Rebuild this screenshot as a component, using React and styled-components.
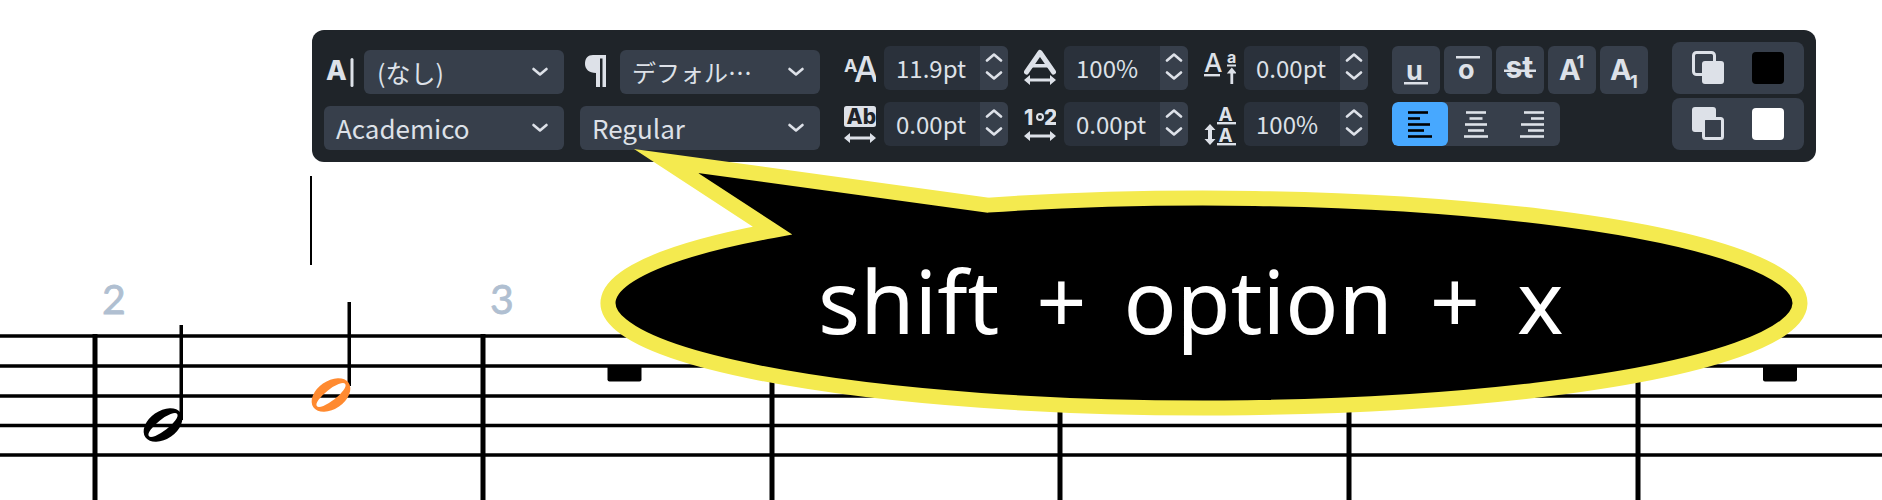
import React from "react";
import styled, { createGlobalStyle } from "styled-components";

const INK = "#dde1e8";
const UI_FONT = '"Noto Sans CJK JP", "Noto Sans", sans-serif';
const ICON_FONT = 'Inter, "Liberation Sans", sans-serif';

const Global = createGlobalStyle`
  html, body { margin: 0; padding: 0; background: #fff; }
  body { font-family: ${UI_FONT}; }
`;

const Stage = styled.div`
  position: relative;
  width: 1882px;
  height: 500px;
  overflow: hidden;
  background: #fff;
`;
const ScoreCanvas = styled.svg`
  display: block;
  width: 1882px;
  height: 500px;
`;
const BarNumber = styled.text`
  font-family: Lato, "Open Sans", sans-serif;
  font-size: 41px;
  fill: #b0bfd1;
  stroke: #b0bfd1;
  stroke-width: 0.8px;
`;

const Panel = styled.div`
  position: absolute;
  left: 312px;
  top: 30px;
  width: 1504px;
  height: 132px;
  box-sizing: border-box;
  padding: 12px;
  display: flex;
  gap: 24px;
  align-items: flex-start;
  background: #1f2429;
  border-radius: 12px;
`;
const Column = styled.div`
  display: flex;
  flex-direction: column;
  margin-top: ${(p) => p.$top || 0}px;
  gap: ${(p) => p.$gap ?? 12}px;
`;
const Row = styled.div`
  display: flex;
  gap: ${(p) => p.$gap ?? 16}px;
`;
const Labelled = styled.div`
  display: flex;
  align-items: center;
`;
const IconSlot = styled.div`
  width: ${(p) => p.$w || 40}px;
  height: 44px;
  flex: none;
`;
const Select = styled.div`
  width: ${(p) => p.$w}px;
  height: 44px;
  box-sizing: border-box;
  padding: 0 15px 0 ${(p) => p.$pad ?? 12}px;
  display: flex;
  align-items: center;
  justify-content: space-between;
  background: #373f4b;
  border-radius: 6px;
  color: ${INK};
  font-size: ${(p) => p.$size || 26}px;
  line-height: 44px;
  white-space: nowrap;
`;
const Spin = styled.div`
  width: 124px;
  height: 44px;
  display: flex;
  background: #2a313b;
  border-radius: 6px;
  overflow: hidden;
  color: ${INK};
  font-size: 24px;
  line-height: 44px;
`;
const SpinValue = styled.div`
  flex: 1;
  padding-left: 12px;
`;
const Stepper = styled.div`
  width: 28px;
  background: #373f4b;
  display: flex;
  align-items: center;
  justify-content: center;
`;
const ToggleButton = styled.div`
  width: 48px;
  height: 48px;
  background: #373f4b;
  border-radius: 6px;
`;
const AlignGroup = styled.div`
  display: flex;
  width: 168px;
  height: 44px;
  background: #373f4b;
  border-radius: 6px;
  overflow: hidden;
`;
const AlignButton = styled.div`
  width: 56px;
  height: 44px;
  background: ${(p) => (p.$active ? "#47a8ff" : "transparent")};
  border-radius: ${(p) => (p.$active ? "6px" : "0")};
`;
const ColorBox = styled.div`
  width: 132px;
  height: 52px;
  box-sizing: border-box;
  padding: 0 20px;
  display: flex;
  align-items: center;
  justify-content: space-between;
  background: #373f4b;
  border-radius: 8px;
`;
const Swatch = styled.div`
  width: 32px;
  height: 32px;
  border-radius: 4px;
  background: ${(p) => p.$color};
`;
const IconSvg = styled.svg`
  display: block;
`;
const Glyph = styled.text`
  font-family: ${ICON_FONT};
  font-weight: ${(p) => p.$weight || 700};
  font-size: ${(p) => p.$size}px;
  fill: ${(p) => p.$fill || INK};
`;

const Callout = styled.div`
  position: absolute;
  left: 590px;
  top: 140px;
  width: 1230px;
  height: 285px;
`;
const CalloutShape = styled.svg`
  display: block;
`;
const CalloutLabel = styled.div`
  position: absolute;
  left: 228px;
  top: 100px;
  font-family: "Noto Sans", sans-serif;
  font-size: 88px;
  line-height: 120px;
  word-spacing: 14px;
  color: #fff;
  white-space: nowrap;
`;

const ChevronDown = () => (
  <IconSvg width="18" height="10" viewBox="0 0 18 10">
    <path d="M2.5 2 9 7.5 15.5 2" fill="none" stroke={INK} strokeWidth="2.6" strokeLinecap="round" strokeLinejoin="round" />
  </IconSvg>
);
const StepperArrows = () => (
  <IconSvg width="18" height="30" viewBox="0 0 18 30">
    <path d="M2 7.5 9 1.5 16 7.5M2 19.5 9 25.5 16 19.5" fill="none" stroke={INK} strokeWidth="2.6" strokeLinecap="round" strokeLinejoin="round" />
  </IconSvg>
);
const HArrow = ({ y, x0 = 0, x1 = 32 }) => (
  <path
    d={`M${x0} ${y}l6 -5v3.4H${x1 - 6}v-3.4l6 5-6 5v-3.4H${x0 + 6}v3.4z`}
    fill={INK}
  />
);
const Icon = ({ w = 32, h = 44, children }) => (
  <IconSvg width={w} height={h} viewBox={`0 0 ${w} ${h}`}>{children}</IconSvg>
);

const StyleIcon = () => (
  <Icon w={40}>
    <Glyph x="2" y="30" $size={27} $weight={800}>A</Glyph>
    <rect x="26.5" y="8" width="3" height="29" rx="1.5" fill={INK} />
  </Icon>
);
const ParagraphIcon = () => (
  <Icon w={40}>
    <path
      d="M13 5H26V37H22.5V8.5H20V37H16V23C9 23 5 19 5 14 5 8 8 5 13 5z"
      fill={INK}
    />
  </Icon>
);
const SizeIcon = () => (
  <Icon>
    <Glyph x="0" y="26" $size={18} $weight={700}>A</Glyph>
    <Glyph x="10" y="36" $size={35} $weight={500}>A</Glyph>
  </Icon>
);
const WidthIcon = () => (
  <Icon>
    <path d="M2.5 26 16 6.5 29.5 26" fill="none" stroke={INK} strokeWidth="5" strokeLinecap="round" strokeLinejoin="round" />
    <rect x="8" y="18" width="16" height="3.5" fill={INK} />
    <HArrow y={34} />
  </Icon>
);
const BaselineIcon = () => (
  <Icon>
    <Glyph x="0" y="26" $size={26} $weight={500}>A</Glyph>
    <rect x="0" y="28" width="16" height="2.4" fill={INK} />
    <Glyph x="23" y="17" $size={16} $weight={700}>a</Glyph>
    <rect x="23" y="18.5" width="9.5" height="2" fill={INK} />
    <path d="M27.8 21.5l5 6h-3.6V38h-2.8V27.5h-3.6z" fill={INK} />
  </Icon>
);
const TrackingIcon = () => (
  <Icon>
    <rect x="0" y="4" width="32" height="21" rx="2.5" fill={INK} />
    <Glyph x="2.5" y="21.5" $size={21} $weight={800} $fill="#1f2429">Ab</Glyph>
    <HArrow y={36} />
  </Icon>
);
const SpacingIcon = () => (
  <Icon>
    <Glyph x="0" y="23" $size={21} $weight={800}>1</Glyph>
    <circle cx="16" cy="15" r="3" fill="none" stroke={INK} strokeWidth="2" />
    <Glyph x="20" y="23" $size={21} $weight={800}>2</Glyph>
    <HArrow y={34} />
  </Icon>
);
const LeadingIcon = () => (
  <Icon>
    <Glyph x="14.5" y="19" $size={19} $weight={700}>A</Glyph>
    <rect x="13" y="20" width="19" height="2.4" fill={INK} />
    <Glyph x="14.5" y="40" $size={19} $weight={700}>A</Glyph>
    <rect x="13" y="41" width="19" height="2.4" fill={INK} />
    <path d="M5 22l5.5 6H7V37h3.5L5 43-.5 37H3V28H-.5z" fill={INK} transform="translate(1 0)" />
  </Icon>
);

const UnderlineIcon = () => (
  <Icon w={48} h={48}>
    <Glyph x="14" y="34" $size={27} $weight={700}>u</Glyph>
    <rect x="12" y="36" width="24" height="2.5" fill={INK} />
  </Icon>
);
const OverlineIcon = () => (
  <Icon w={48} h={48}>
    <Glyph x="14" y="33" $size={27} $weight={700}>o</Glyph>
    <rect x="12" y="10" width="24" height="2.5" fill={INK} />
  </Icon>
);
const StrikeIcon = () => (
  <Icon w={48} h={48}>
    <Glyph x="9.5" y="32" $size={30} $weight={700}>st</Glyph>
    <rect x="8" y="23.5" width="32" height="2.5" fill={INK} />
  </Icon>
);
const SuperIcon = () => (
  <Icon w={48} h={48}>
    <Glyph x="11" y="34" $size={29} $weight={700}>A</Glyph>
    <Glyph x="28.5" y="22" $size={18} $weight={700}>1</Glyph>
  </Icon>
);
const SubIcon = () => (
  <Icon w={48} h={48}>
    <Glyph x="10" y="34" $size={29} $weight={700}>A</Glyph>
    <Glyph x="30" y="42" $size={18} $weight={700}>1</Glyph>
  </Icon>
);

const AlignIcon = ({ rows, color, anchor }) => (
  <Icon w={56}>
    {rows.map((len, i) => {
      const x = anchor === "left" ? 16 : anchor === "right" ? 40 - len : 28 - len / 2;
      return <rect key={i} x={x} y={9.2 + i * 6} width={len} height="2.6" fill={color} />;
    })}
  </Icon>
);

const ForeIcon = () => (
  <Icon h={34}>
    <rect x="1.5" y="1.5" width="21" height="22" rx="3" fill="none" stroke={INK} strokeWidth="3" />
    <rect x="10" y="10" width="22" height="23" rx="3" fill={INK} />
  </Icon>
);
const BackIcon = () => (
  <Icon h={34}>
    <rect x="0" y="0" width="24" height="25" rx="3" fill={INK} />
    <rect x="11.5" y="11.5" width="19" height="20" rx="2" fill="#373f4b" stroke={INK} strokeWidth="3" />
  </Icon>
);

const ellipsePath = (cx, cy, rx, ry, deg) => {
  const a = (deg * Math.PI) / 180;
  const dx = rx * Math.cos(a);
  const dy = rx * Math.sin(a);
  return `M${cx - dx} ${cy - dy}A${rx} ${ry} ${deg} 1 0 ${cx + dx} ${cy + dy}A${rx} ${ry} ${deg} 1 0 ${cx - dx} ${cy - dy}Z`;
};
const NoteHead = ({ cx, cy, color }) => (
  <path
    d={ellipsePath(cx, cy, 21.5, 14, -35) + ellipsePath(cx, cy, 18, 5.5, -38)}
    fill={color}
    fillRule="evenodd"
  />
);

const STAFF_Y = [336, 366, 396, 425.5, 455];
const BAR_X = [95, 483, 772, 1060, 1349, 1638];

const Score = () => (
  <ScoreCanvas viewBox="0 0 1882 500">
    {STAFF_Y.map((y) => (
      <rect key={y} x="0" y={y - 1.75} width="1882" height="3.5" fill="#000" />
    ))}
    {BAR_X.map((x) => (
      <rect key={x} x={x - 2.5} y="334" width="5" height="166" fill="#000" />
    ))}
    <rect x="310" y="176" width="2" height="89" fill="#000" />
    <BarNumber x="102" y="314">2</BarNumber>
    <BarNumber x="490" y="314">3</BarNumber>
    <rect x="179.5" y="325" width="3.5" height="95" fill="#000" />
    <NoteHead cx={163} cy={425} color="#000" />
    <rect x="347.5" y="302" width="3.5" height="84" fill="#000" />
    <NoteHead cx={331} cy={395} color="#ff8a30" />
    <path d="M607.5 366h34v13.5a2 2 0 0 1-2 2h-30a2 2 0 0 1-2-2z" fill="#000" />
    <path d="M1763 366h34v13.5a2 2 0 0 1-2 2h-30a2 2 0 0 1-2-2z" fill="#000" />
  </ScoreCanvas>
);

const SpinField = ({ icon, value }) => (
  <Labelled>
    <IconSlot>{icon}</IconSlot>
    <Spin>
      <SpinValue>{value}</SpinValue>
      <Stepper><StepperArrows /></Stepper>
    </Spin>
  </Labelled>
);

export default function App() {
  return (
    <Stage>
      <Global />
      <Score />
      <Panel>
        <Column $top={8}>
          <Row>
            <Labelled>
              <IconSlot><StyleIcon /></IconSlot>
              <Select $w={200} $pad={13} $size={25}>(なし)<ChevronDown /></Select>
            </Labelled>
            <Labelled>
              <IconSlot><ParagraphIcon /></IconSlot>
              <Select $w={200} $size={24}>デフォル…<ChevronDown /></Select>
            </Labelled>
          </Row>
          <Row>
            <Select $w={240}>Academico<ChevronDown /></Select>
            <Select $w={240}>Regular<ChevronDown /></Select>
          </Row>
        </Column>
        <Column $top={4}>
          <Row>
            <SpinField icon={<SizeIcon />} value="11.9pt" />
            <SpinField icon={<WidthIcon />} value="100%" />
            <SpinField icon={<BaselineIcon />} value="0.00pt" />
          </Row>
          <Row>
            <SpinField icon={<TrackingIcon />} value="0.00pt" />
            <SpinField icon={<SpacingIcon />} value="0.00pt" />
            <SpinField icon={<LeadingIcon />} value="100%" />
          </Row>
        </Column>
        <Column $top={4} $gap={8}>
          <Row $gap={4}>
            <ToggleButton><UnderlineIcon /></ToggleButton>
            <ToggleButton><OverlineIcon /></ToggleButton>
            <ToggleButton><StrikeIcon /></ToggleButton>
            <ToggleButton><SuperIcon /></ToggleButton>
            <ToggleButton><SubIcon /></ToggleButton>
          </Row>
          <AlignGroup>
            <AlignButton $active><AlignIcon anchor="left" color="#000" rows={[20, 12, 22, 16, 24]} /></AlignButton>
            <AlignButton><AlignIcon anchor="center" color={INK} rows={[20, 13, 22, 16, 24]} /></AlignButton>
            <AlignButton><AlignIcon anchor="right" color={INK} rows={[20, 13, 23, 16, 24]} /></AlignButton>
          </AlignGroup>
        </Column>
        <Column $gap={4}>
          <ColorBox><ForeIcon /><Swatch $color="#000" /></ColorBox>
          <ColorBox><BackIcon /><Swatch $color="#fff" /></ColorBox>
        </Column>
      </Panel>
      <Callout>
        <CalloutShape width="1230" height="285" viewBox="590 140 1230 285">
          <path
            d="M772.5 230.57 L666 161 L988 205.14 A596 105 0 1 1 772.5 230.57 Z"
            fill="#000"
            stroke="#f4ea4f"
            strokeWidth="15"
            strokeMiterlimit="20"
          />
        </CalloutShape>
        <CalloutLabel>shift + option + x</CalloutLabel>
      </Callout>
    </Stage>
  );
}
